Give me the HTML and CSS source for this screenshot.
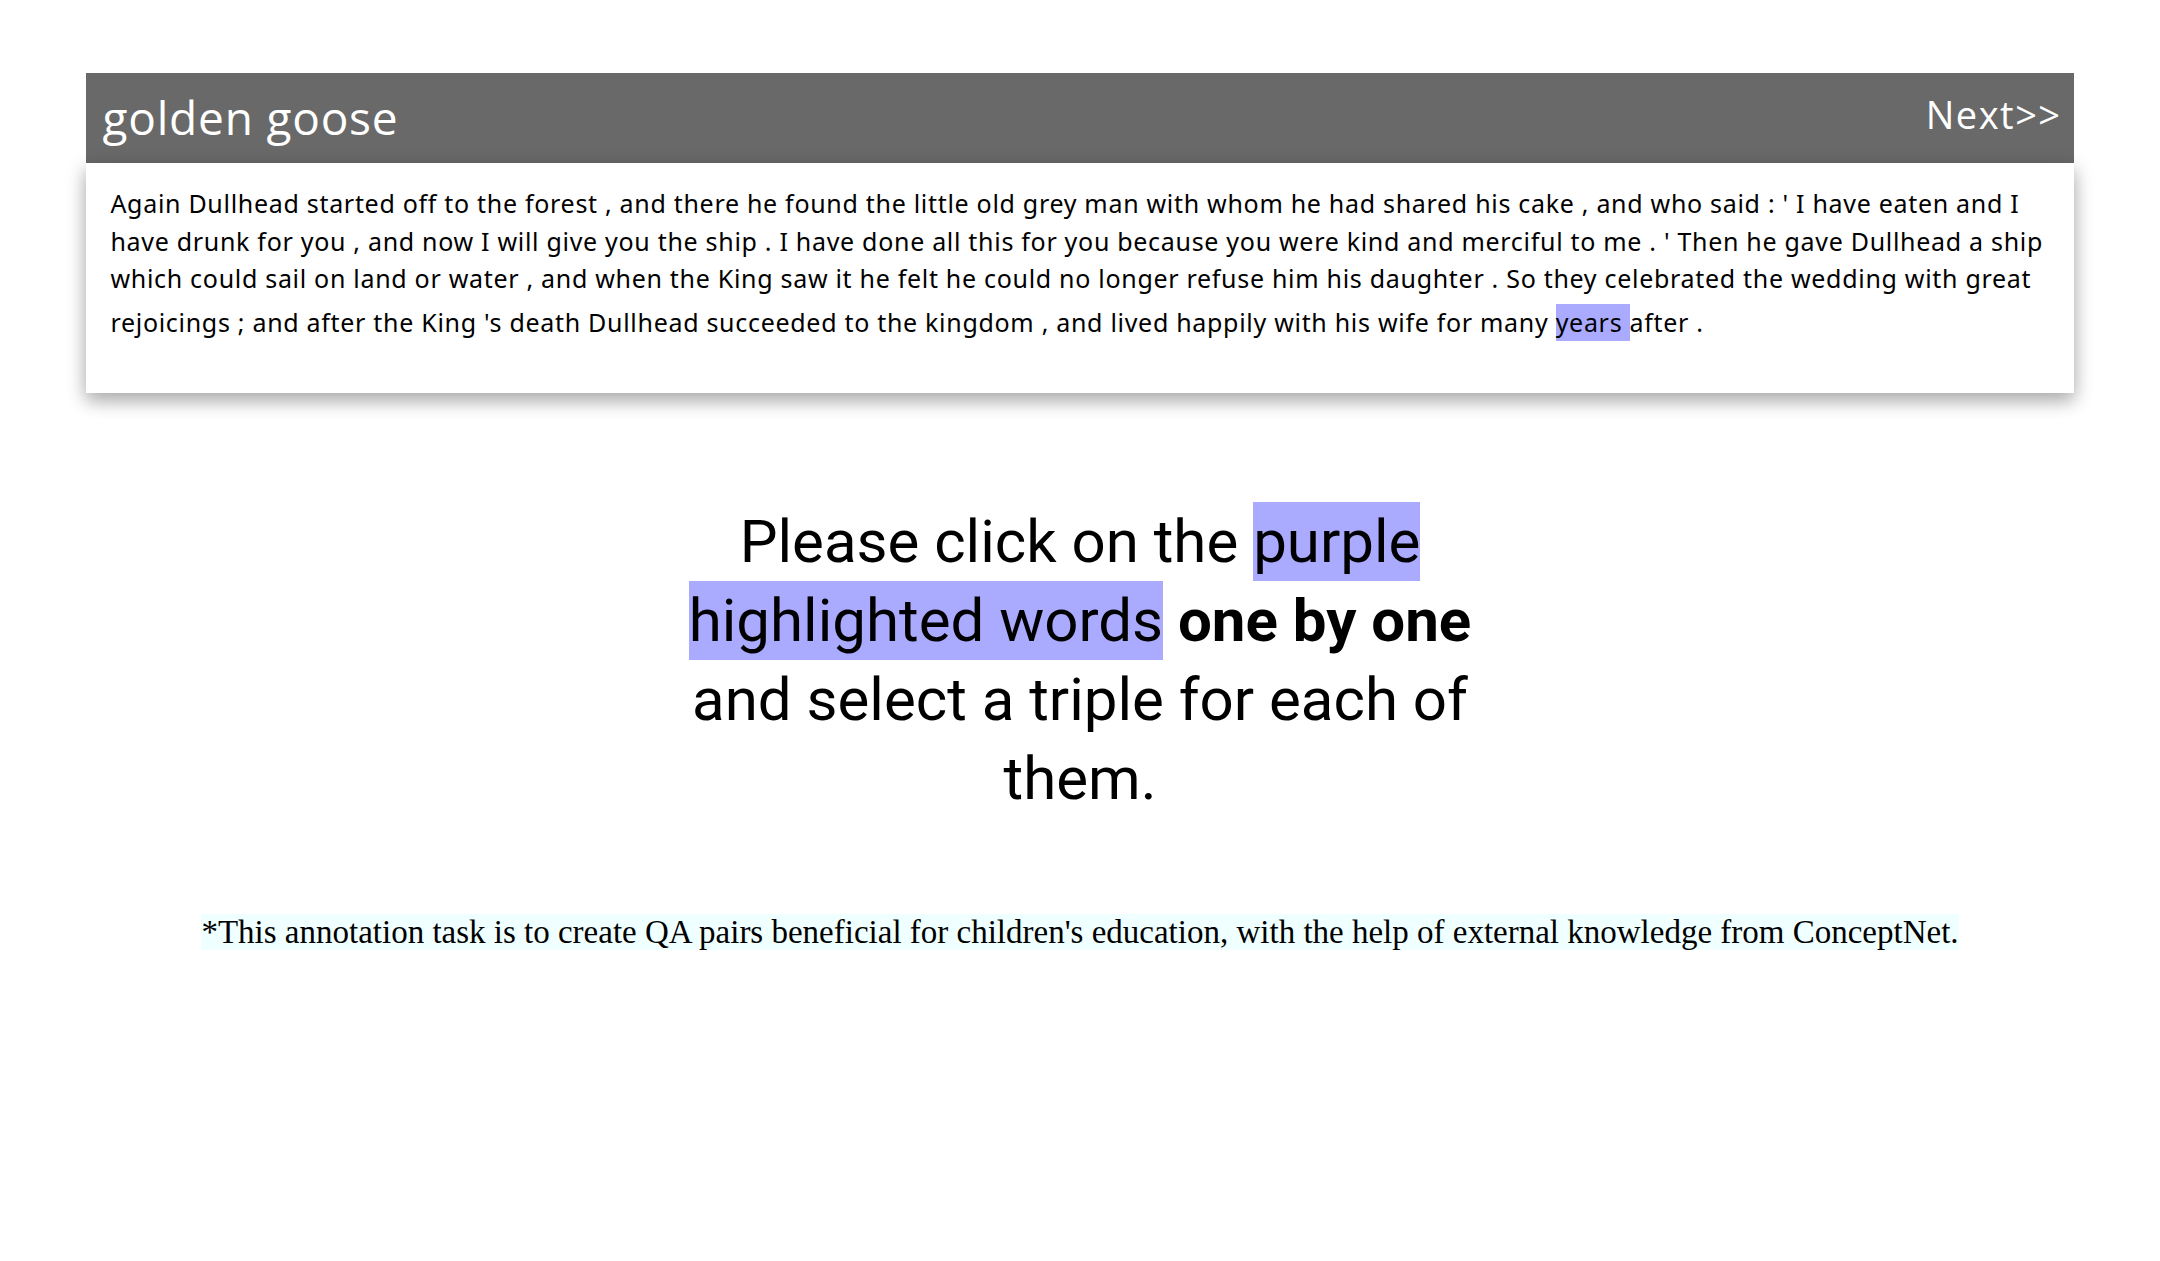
FILE: index.html
```html
<!DOCTYPE html>
<html lang="en">
<head>
    <meta charset="UTF-8">
    <title>golden goose</title>
    <link rel="stylesheet" href="styles.css">
</head>
<body>

    <!-- Story card -->
    <div class="story">
        <div class="story-head">
            <span class="story-title">golden goose</span>
            <a class="next-link" href="#">Next&gt;&gt;</a>
        </div>
        <div class="story-body">
            <p>Again Dullhead started off to the forest , and there he found the little old grey man with whom he had shared his cake , and who said : ' I have eaten and I have drunk for you , and now I will give you the ship . I have done all this for you because you were kind and merciful to me . ' Then he gave Dullhead a ship which could sail on land or water , and when the King saw it he felt he could no longer refuse him his daughter . So they celebrated the wedding with great rejoicings ; and after the King 's death Dullhead succeeded to the kingdom , and lived happily with his wife for many <span class="word">years&nbsp;</span>after .</p>
        </div>
    </div>

    <!-- Instructions -->
    <div class="instruction">
        Please click on the <span class="mark">purple highlighted words</span> <b>one by one</b> and select a triple for each of them.
    </div>

    <p class="note"><span>*This annotation task is to create QA pairs beneficial for children's education, with the help of external knowledge from ConceptNet.</span></p>

</body>
</html>
```

FILE: styles.css
```css
body {
    margin: 0;
    padding-top: 73px;
    background-color: white;
    font-family: Roboto, "Liberation Sans", sans-serif;
    color: #000;
}

.story {
    width: 92%;
    margin: 0 auto;
}

.story-head {
    display: flex;
    justify-content: space-between;
    align-items: flex-start;
    height: 90px;
    padding: 0 12px 0 16px;
    background-color: #696969;
    font-family: "Open Sans", sans-serif;
    color: white;
}

.story-title {
    padding-top: 13px;
    font-size: 46px;
    line-height: 63px;
    letter-spacing: 0.8px;
}

.next-link {
    padding-top: 15px;
    font-size: 38px;
    line-height: 52px;
    letter-spacing: 1.5px;
    color: white;
    text-decoration: none;
}

.story-body {
    padding: 22px 24px 32px 24px;
    background-color: white;
    box-shadow: 0 8px 16px 0 rgba(0, 0, 0, 0.2), 0 6px 20px 0 rgba(0, 0, 0, 0.19);
}

.story-body p {
    margin: 0 0 20px;
    font-family: "Noto Sans", sans-serif;
    font-size: 25px;
    line-height: 37.5px;
    letter-spacing: 0.7px;
}

.word {
    display: inline-block;
    margin-top: 6px;
    padding: 3px 0;
    line-height: 31px;
    background-color: #aaaaff;
}

.instruction {
    width: 840px;
    margin: 109px auto 0;
    text-align: center;
    font-size: 60px;
    line-height: 79px;
}

.mark {
    padding: 4px 0;
    background-color: #aaaaff;
}

.note {
    margin: 96px 0 0;
    text-align: center;
    font-family: "Liberation Serif", serif;
    font-size: 33px;
}

.note span {
    background-color: azure;
}
```
